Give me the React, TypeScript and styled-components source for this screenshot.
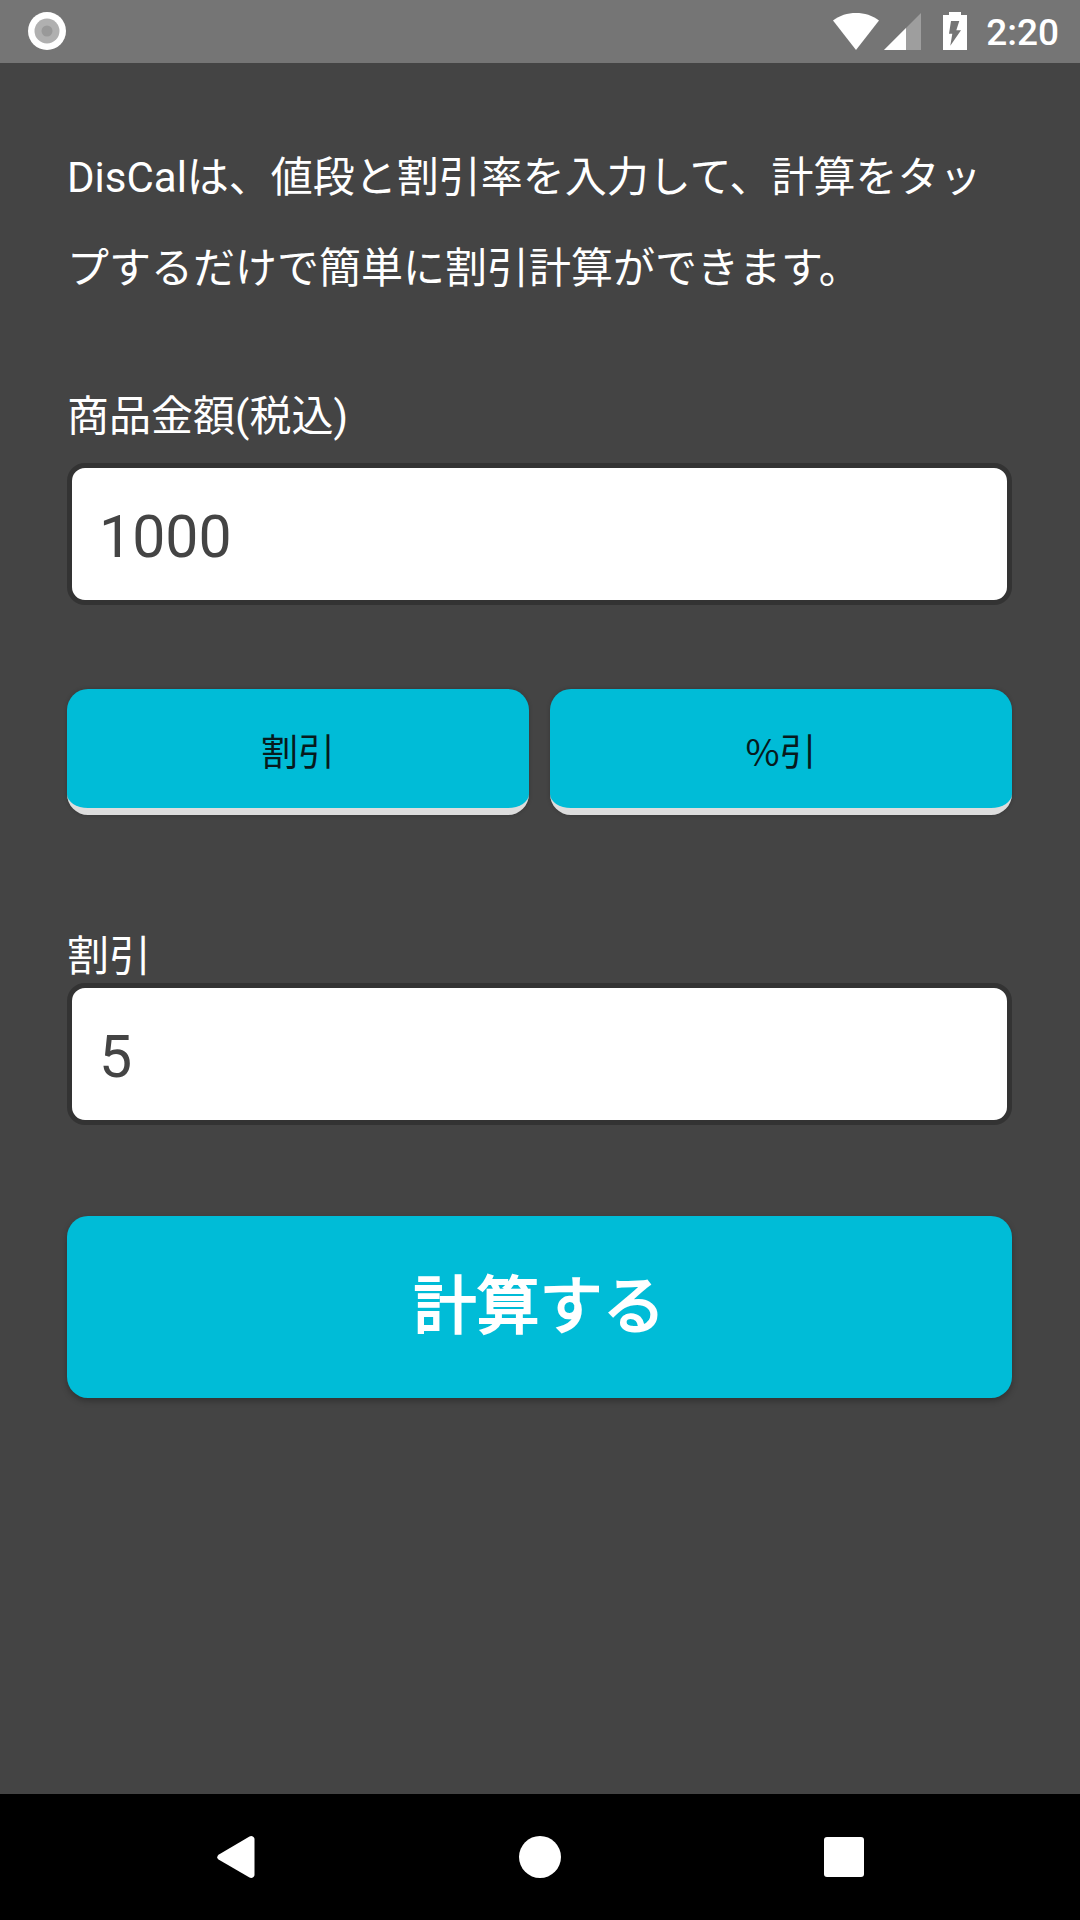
import React, { useState } from "react";
import styled, { createGlobalStyle } from "styled-components";

const GlobalStyle = createGlobalStyle`
  *, *::before, *::after { box-sizing: border-box; }
  body {
    margin: 0;
    background: #444444;
    color: #ffffff;
    font-family: Roboto, "Noto Sans CJK JP", sans-serif;
  }
  button, input { font: inherit; margin: 0; }
`;

const Screen = styled.div`
  display: flex;
  flex-direction: column;
  min-height: 100vh;
`;

const StatusBar = styled.header`
  display: flex;
  align-items: center;
  justify-content: space-between;
  height: 63px;
  padding: 0 21px 1px 28px;
  background: #757575;
`;

const StatusIcons = styled.div`
  display: flex;
  align-items: center;
`;

const StatusIcon = styled.svg<{ $gap?: number }>`
  display: block;
  margin-right: ${({ $gap = 0 }) => $gap}px;
`;

const Clock = styled.time`
  font-size: 37px;
  line-height: 58px;
  font-weight: 500;
  padding-top: 4px;
`;

const Main = styled.main`
  flex: 1;
  padding: 69px 68px 68px 67px;
`;

const Intro = styled.p`
  margin: 0;
  font-size: 42px;
  line-height: 91px;
`;

const Field = styled.div<{ $top: number; $gap?: number }>`
  display: flex;
  flex-direction: column;
  gap: ${({ $gap = 0 }) => $gap}px;
  margin-top: ${({ $top }) => $top}px;
`;

const Label = styled.label`
  font-size: 42px;
  line-height: 52px;
`;

const TextBox = styled.input`
  width: 100%;
  height: 142px;
  padding: 4px 27px 0;
  border: 5px solid #333333;
  border-radius: 18px;
  background: #ffffff;
  color: #444444;
  font-size: 59px;
  outline: none;
`;

const ModeRow = styled.div`
  display: grid;
  grid-template-columns: 1fr 1fr;
  gap: 21px;
  margin-top: 84px;
`;

const Button = styled.button`
  border: 0;
  border-radius: 21px;
  background: #00bcd7;
  box-shadow: 0 3px 6px rgba(0, 0, 0, 0.28);
  font-family: "Noto Sans CJK JP", sans-serif;
  cursor: pointer;
`;

const ModeButton = styled(Button)`
  height: 126px;
  padding: 2px 0 0;
  border-bottom: 7px solid #dddddd;
  box-shadow: 0 0 4px rgba(0, 0, 0, 0.2);
  color: #071a1d;
  font-size: 37px;
`;

const SubmitButton = styled(Button)`
  width: 100%;
  height: 182px;
  margin-top: 91px;
  padding: 0 0 14px;
  color: #ffffff;
  font-size: 63px;
  -webkit-text-stroke: 2px #ffffff;
  paint-order: stroke fill;
`;

const NavBar = styled.nav`
  display: flex;
  justify-content: center;
  height: 126px;
  background: #000000;
`;

const NavButton = styled.button`
  display: flex;
  align-items: center;
  justify-content: center;
  width: 304px;
  padding: 0;
  border: 0;
  background: none;
  color: #ffffff;
`;

export default function App() {
  const [price, setPrice] = useState("1000");
  const [rate, setRate] = useState("5");
  const [mode, setMode] = useState("割引");

  return (
    <Screen>
      <GlobalStyle />
      <StatusBar>
        <StatusIcon width="38" height="38" viewBox="0 0 38 38" aria-hidden="true">
          <circle cx="19" cy="19" r="19" fill="#ffffff" />
          <circle cx="19" cy="19" r="12.5" fill="#b0b0b0" />
          <circle cx="19" cy="19" r="5.5" fill="#999999" />
        </StatusIcon>
        <StatusIcons>
          <StatusIcon $gap={5} width="46" height="38" viewBox="0 0 46 38" aria-hidden="true">
            <path d="M0 8.5C6.5 3.4 14.5 1 23 1s16.500 2.400 23 7.500L23 38z" fill="#ffffff" />
          </StatusIcon>
          <StatusIcon $gap={22} width="37" height="38" viewBox="0 0 37 38" aria-hidden="true">
            <path d="M37 1v37H0z" fill="#ffffff" fillOpacity="0.3" />
            <path d="M22 16v22H0z" fill="#ffffff" />
          </StatusIcon>
          <StatusIcon $gap={19} width="24" height="38" viewBox="0 0 24 38" aria-hidden="true">
            <path
              d="M6 0h12v3h6v35H0V3h6zM8 9L6 21.700H9.300L7.300 33.700L18 18.300H13.300L16.300 9z"
              fill="#ffffff"
              fillRule="evenodd"
            />
          </StatusIcon>
          <Clock>2:20</Clock>
        </StatusIcons>
      </StatusBar>

      <Main>
        <Intro>
          DisCalは、値段と割引率を入力して、計算をタップするだけで簡単に割引計算ができます。
        </Intro>
        <Field $top={77} $gap={20}>
          <Label htmlFor="price">商品金額(税込)</Label>
          <TextBox
            id="price"
            inputMode="numeric"
            value={price}
            onChange={(e) => setPrice(e.target.value)}
          />
        </Field>
        <ModeRow>
          <ModeButton type="button" onClick={() => setMode("割引")}>割引</ModeButton>
          <ModeButton type="button" onClick={() => setMode("%引")}>%引</ModeButton>
        </ModeRow>
        <Field $top={116}>
          <Label htmlFor="rate">{mode}</Label>
          <TextBox
            id="rate"
            inputMode="numeric"
            value={rate}
            onChange={(e) => setRate(e.target.value)}
          />
        </Field>
        <SubmitButton type="button">計算する</SubmitButton>
      </Main>

      <NavBar>
        <NavButton type="button" aria-label="戻る">
          <svg width="38" height="42" viewBox="0 0 38 42" aria-hidden="true">
            <path
              d="M1.500 18.800L32.500 0.500Q34.500 -0.500 36.500 1Q37.500 1.800 37.500 3V39Q37.500 40.200 36.500 41Q34.500 42.500 32.500 41.500L1.500 23.600Q-1 21.200 1.500 18.800Z"
              fill="currentColor"
            />
          </svg>
        </NavButton>
        <NavButton type="button" aria-label="ホーム">
          <svg width="42" height="42" viewBox="0 0 42 42" aria-hidden="true">
            <circle cx="21" cy="21" r="21" fill="currentColor" />
          </svg>
        </NavButton>
        <NavButton type="button" aria-label="アプリ履歴">
          <svg width="40" height="40" viewBox="0 0 40 40" aria-hidden="true">
            <rect width="40" height="40" rx="3" fill="currentColor" />
          </svg>
        </NavButton>
      </NavBar>
    </Screen>
  );
}
